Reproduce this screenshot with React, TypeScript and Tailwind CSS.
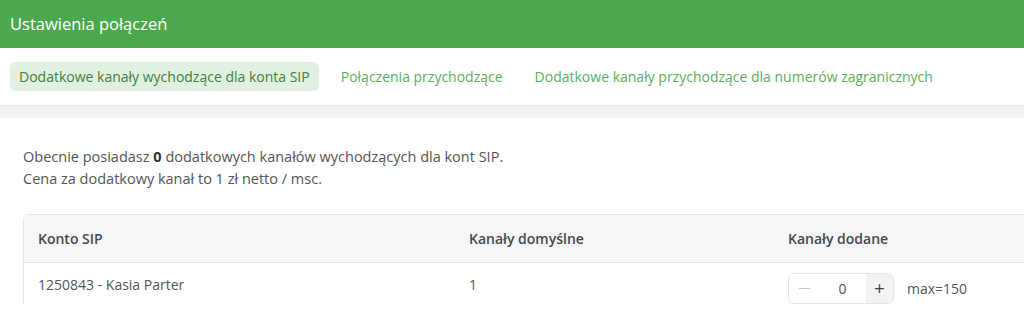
import React from "react";

const tabs = [
  "Dodatkowe kanały wychodzące dla konta SIP",
  "Połączenia przychodzące",
  "Dodatkowe kanały przychodzące dla numerów zagranicznych",
];

export default function App() {
  return (
    <div
      className="h-[312px] w-[1024px] overflow-hidden bg-white text-[14px] text-[#555]"
      style={{ fontFamily: '"Open Sans", sans-serif' }}
    >
      {/* Header */}
      <div className="flex h-12 items-center bg-[#4ca84c] px-[10px] text-[16.5px] text-white">
        Ustawienia połączeń
      </div>

      {/* Tabs */}
      <div className="flex h-[58px] items-center gap-[12px] border-b border-[#e6e6e6] px-[10px]">
        {tabs.map((t, i) => (
          <div
            key={t}
            className={
              i === 0
                ? "rounded-md bg-[#e1f0e1] px-[9px] py-[4px] text-[#3f7f3f]"
                : "px-[10px] py-[4px] text-[#5cae5c]"
            }
          >
            {t}
          </div>
        ))}
      </div>
      <div className="h-3 bg-[#f3f3f3]" />

      {/* Content */}
      <div className="pl-[23px] pt-[28px]">
        <p className="text-[14.5px] leading-[22px]">
          Obecnie posiadasz <b className="text-[#333]">0</b> dodatkowych kanałów wychodzących dla kont SIP.
          <br />
          Cena za dodatkowy kanał to 1 zł netto / msc.
        </p>

        <div className="mt-[24px] rounded-tl-md border-l border-t border-[#e6e6e6]">
          <div className="grid h-[48px] grid-cols-[431px_319px_1fr] items-center border-b border-[#e6e6e6] bg-[#f5f6f7] pl-[14px] font-semibold text-[#484848]">
            <div>Konto SIP</div>
            <div>Kanały domyślne</div>
            <div>Kanały dodane</div>
          </div>
          <div className="grid grid-cols-[431px_319px_1fr] items-center pl-[14px] pt-[10px]">
            <div className="-mt-[8px]">1250843 - Kasia Parter</div>
            <div className="-mt-[8px]">1</div>
            <div className="flex items-center gap-[13px]">
              <div className="flex h-[31px] w-[106px] items-center overflow-hidden rounded-md border border-[#e6e6e6]">
                <span className="flex w-[30px] justify-center">
                  <span className="block h-px w-[11px] bg-[#c8c8c8]" />
                </span>
                <span className="flex-1 text-center">0</span>
                <span className="flex h-full w-[27px] items-center justify-center bg-[#f3f3f3] text-[19px] text-[#444]">+</span>
              </div>
              <span>max=150</span>
            </div>
          </div>
        </div>
      </div>
    </div>
  );
}
